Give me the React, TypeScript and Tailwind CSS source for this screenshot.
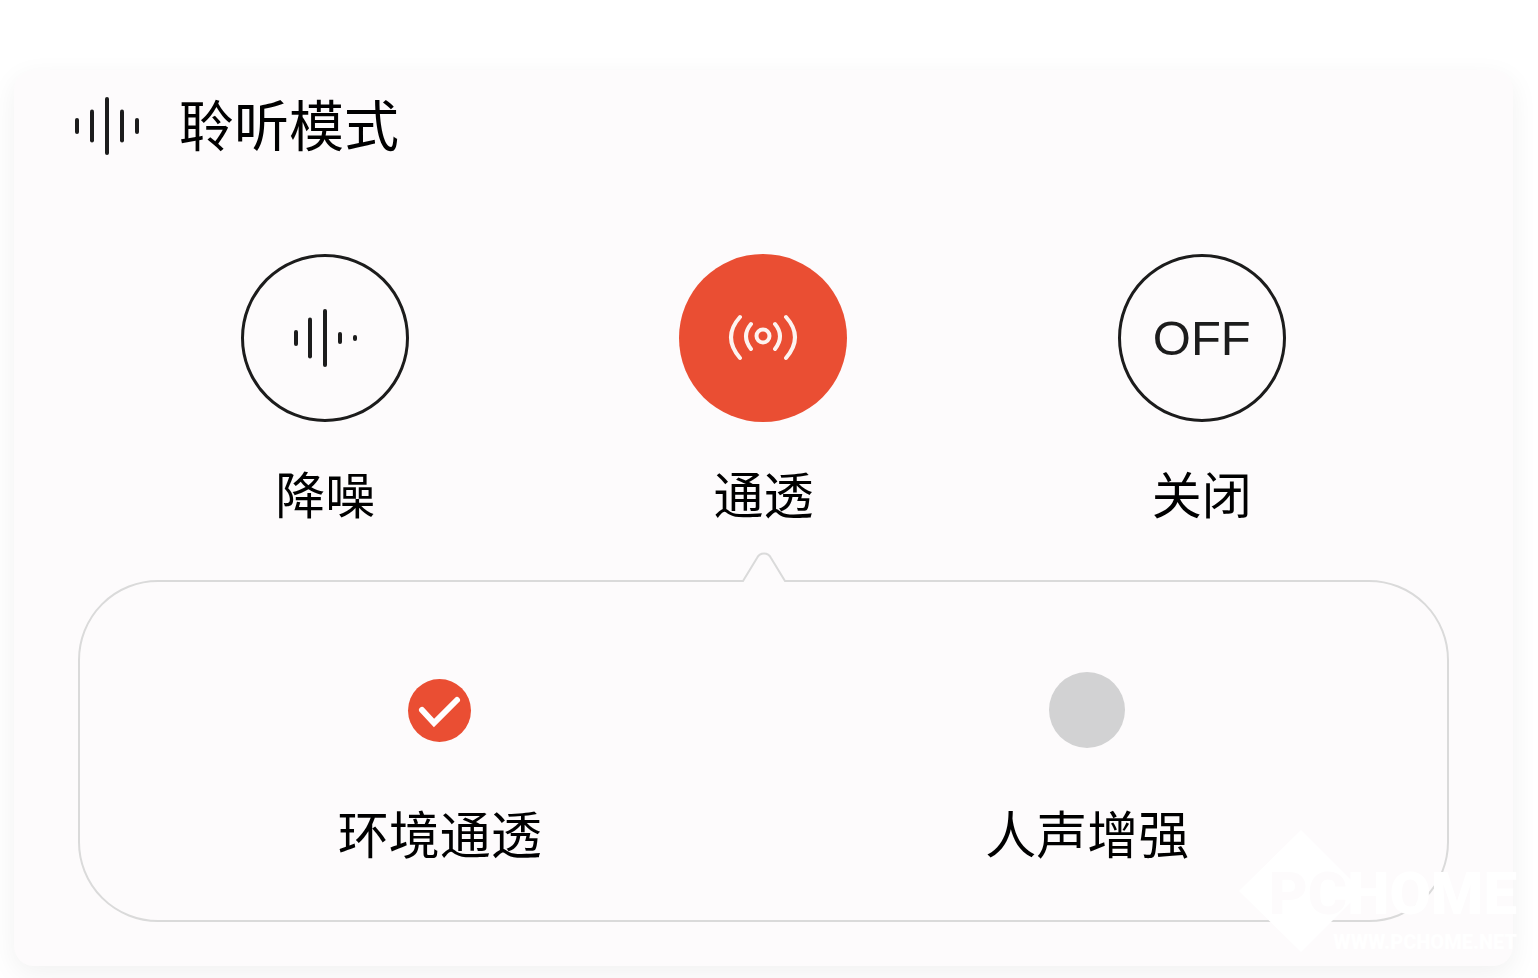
import { useState } from 'react';
import clsx from 'clsx';

type Bar = { x: number; h: number };

const TITLE_BARS: Bar[] = [
  { x: 3, h: 16 },
  { x: 18, h: 33 },
  { x: 33, h: 58 },
  { x: 48, h: 33 },
  { x: 63, h: 16 },
];

const NOISE_BARS: Bar[] = [
  { x: 3, h: 16 },
  { x: 17, h: 41 },
  { x: 32, h: 58 },
  { x: 47, h: 12 },
  { x: 62, h: 6 },
];

function WaveIcon({ bars }: { bars: Bar[] }) {
  return (
    <svg viewBox="0 0 65 60" className="h-[60px] w-[65px] shrink-0" fill="#1c1c1c" aria-hidden="true">
      {bars.map((b) => (
        <rect key={b.x} x={b.x - 2} y={30 - b.h / 2} width="4" height={b.h} rx="2" />
      ))}
    </svg>
  );
}

function TransparencyIcon() {
  return (
    <svg
      viewBox="0 0 70 50"
      className="h-[50px] w-[70px]"
      fill="none"
      stroke="#fdf3f0"
      strokeWidth="4"
      strokeLinecap="round"
      aria-hidden="true"
    >
      <circle cx="35" cy="23" r="6.5" />
      <path d="M23 11Q13 23 23 36M47 11Q57 23 47 36" />
      <path d="M12 4Q-6 24 12 45M58 4Q76 24 58 45" />
    </svg>
  );
}

const MODES = [
  { id: 'anc', label: '降噪', icon: <WaveIcon bars={NOISE_BARS} /> },
  { id: 'transparency', label: '通透', icon: <TransparencyIcon /> },
  {
    id: 'off',
    label: '关闭',
    icon: <span className="font-['Liberation_Sans',sans-serif] text-[49px] leading-[56px] text-[#1c1c1c]">OFF</span>,
  },
];

const OPTIONS = [
  { id: 'ambient', label: '环境通透' },
  { id: 'voice', label: '人声增强' },
];

function Watermark() {
  return (
    <div
      className="pointer-events-none absolute -right-1 bottom-3 flex h-[124px] w-[278px] flex-col items-end justify-end font-['Roboto',sans-serif] font-black text-white select-none"
      aria-hidden="true"
    >
      <svg viewBox="0 0 278 124" className="absolute inset-0" fill="#ffffff">
        <path d="M62 0L123 61L62 122L0 61Z" />
      </svg>
      <div className="relative text-[60px] leading-[72px]">
        <span className="text-[#fdfbfc]">PC</span>HOME
      </div>
      <div className="relative text-[20px] leading-6">WWW.PCHOME.NET</div>
    </div>
  );
}

export default function App() {
  const [mode, setMode] = useState('transparency');
  const [option, setOption] = useState('ambient');

  return (
    <main className="overflow-hidden bg-white pt-[70px] pr-[25px] pb-3 pl-[14px] font-['Noto_Sans_CJK_SC',sans-serif] text-black">
      <section className="relative rounded-[20px] bg-[#fdfbfc] px-[60px] pt-6 pb-11 shadow-[0_8px_28px_rgba(0,0,0,0.06)]">
        <div className="flex h-16 items-center gap-10">
          <WaveIcon bars={TITLE_BARS} />
          <h1 className="self-start text-[55px] leading-[56px]">聆听模式</h1>
        </div>

        <div className="mt-24 grid grid-cols-3 px-8">
          {MODES.map((m) => (
            <button
              key={m.id}
              type="button"
              aria-pressed={mode === m.id}
              onClick={() => setMode(m.id)}
              className="flex flex-col items-center gap-[42px]"
            >
              <span
                className={clsx(
                  'flex size-[168px] items-center justify-center rounded-full',
                  mode === m.id ? 'bg-[#ea4e33]' : 'border-3 border-[#1c1c1c]',
                )}
              >
                {m.icon}
              </span>
              <span className="text-[50px] leading-[56px]">{m.label}</span>
            </button>
          ))}
        </div>

        <div className="relative mx-1 mt-[60px] rounded-[80px] border-2 border-[#dadada] px-9 pt-[90px] pb-[60px]">
          <svg
            viewBox="0 0 46 32"
            className="absolute -top-[30px] left-1/2 h-8 w-[46px] -translate-x-1/2"
            fill="#fdfbfc"
            aria-hidden="true"
          >
            <path d="M1 32V29H2L16 6C19 0 27 0 30 6L44 29H45V32Z" />
            <path d="M0 29H2L16 6C19 0 27 0 30 6L44 29H46" fill="none" stroke="#dadada" strokeWidth="2" />
          </svg>
          <div className="grid grid-cols-2">
            {OPTIONS.map((o) => (
              <label key={o.id} className="flex flex-col items-center gap-14 text-[51px] leading-[56px]">
                <span className="relative flex size-[76px] items-center justify-center">
                  <input
                    type="radio"
                    name="option"
                    checked={option === o.id}
                    onChange={() => setOption(o.id)}
                    className="size-[76px] appearance-none rounded-full bg-[#d2d2d3] checked:size-[63px] checked:bg-[#ea4e33]"
                  />
                  {option === o.id && (
                    <svg
                      viewBox="0 0 63 63"
                      className="pointer-events-none absolute size-[63px]"
                      fill="none"
                      stroke="#ffffff"
                      strokeWidth="6"
                      strokeLinecap="round"
                      aria-hidden="true"
                    >
                      <path d="M14 31L26 44L49 21" />
                    </svg>
                  )}
                </span>
                {o.label}
              </label>
            ))}
          </div>
        </div>
        <Watermark />
      </section>
    </main>
  );
}
